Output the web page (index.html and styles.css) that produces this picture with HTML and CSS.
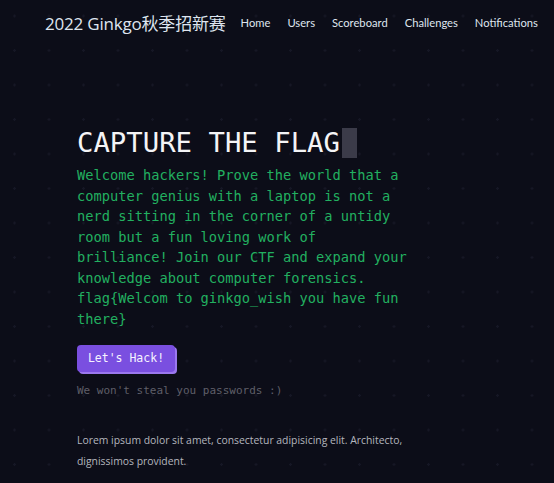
FILE: index.html
```html
<!DOCTYPE html>
<html lang="zh">
<head>
<meta charset="utf-8">
<title>2022 Ginkgo秋季招新赛</title>
<link rel="stylesheet" href="styles.css">
</head>
<body>
<header class="navbar">
  <a class="brand" href="#">2022 Ginkgo秋季招新赛</a>
  <nav class="nav">
    <a href="#">Home</a>
    <a href="#">Users</a>
    <a href="#">Scoreboard</a>
    <a href="#">Challenges</a>
    <a href="#">Notifications</a>
  </nav>
</header>
<main class="hero">
  <h1 class="title">CAPTURE THE FLAG<span class="cursor"></span></h1>
  <p class="intro">Welcome hackers! Prove the world that a computer genius with a laptop is not a nerd sitting in the corner of a untidy room but a fun loving work of brilliance! Join our CTF and expand your knowledge about computer forensics. flag{Welcom to ginkgo_wish you have fun there}</p>
  <a class="btn" href="#">Let's Hack!</a>
  <p class="note">We won't steal you passwords :)</p>
  <p class="lorem">Lorem ipsum dolor sit amet, consectetur adipisicing elit. Architecto, dignissimos provident.</p>
</main>
</body>
</html>
```

FILE: styles.css
```css
html, body {
  margin: 0;
  padding: 0;
  height: 100%;
}
body {
  background-color: #0c0d18;
  background-image: radial-gradient(circle, #161725 1px, transparent 1.5px);
  background-size: 34.5px 34.5px;
  background-position: -2.75px -1.25px;
  font-family: "Open Sans", "Noto Sans CJK SC", sans-serif;
  overflow: hidden;
}
a { text-decoration: none; }

.navbar {
  display: flex;
  align-items: center;
  padding: 10px 0 0 45px;
  height: 24px;
  white-space: nowrap;
}
.brand {
  color: #dfe5ef;
  font-size: 17px;
  font-family: "Open Sans", "Noto Sans CJK SC", sans-serif;
  margin-right: 15px;
  letter-spacing: -0.2px;
}
.nav {
  display: flex;
  gap: 17px;
}
.nav a {
  color: #dfe5ef;
  font-family: Lato, sans-serif;
  font-size: 11.2px;
}

.hero {
  padding: 93px 0 0 77px;
  font-family: "DejaVu Sans Mono", monospace;
}
.title {
  margin: 0;
  color: #f4f4f6;
  font-family: "DejaVu Sans Mono", monospace;
  font-weight: normal;
  font-size: 27.3px;
  line-height: 32px;
  display: flex;
  align-items: center;
}
.cursor {
  display: inline-block;
  width: 15px;
  height: 30px;
  background: #3b3b49;
  margin-left: 2px;
}
.intro {
  margin: 6px 0 0;
  width: 335px;
  color: #22b060;
  font-size: 13.7px;
  line-height: 20.5px;
}
.btn {
  display: inline-block;
  margin-top: 16px;
  width: 98px;
  height: 27px;
  box-sizing: border-box;
  line-height: 26px;
  text-align: center;
  background: #7a4fe0;
  color: #f6f3ff;
  font-size: 11.5px;
  border-radius: 4px;
  box-shadow: 2px 2px 0 #9b78ee;
}
.note {
  margin: 12px 0 0;
  color: #5f5f68;
  font-size: 11px;
}
.lorem {
  margin: 33px 0 0;
  width: 360px;
  color: #b4b6be;
  font-family: "Open Sans", sans-serif;
  font-size: 10.4px;
  line-height: 21px;
}
```
